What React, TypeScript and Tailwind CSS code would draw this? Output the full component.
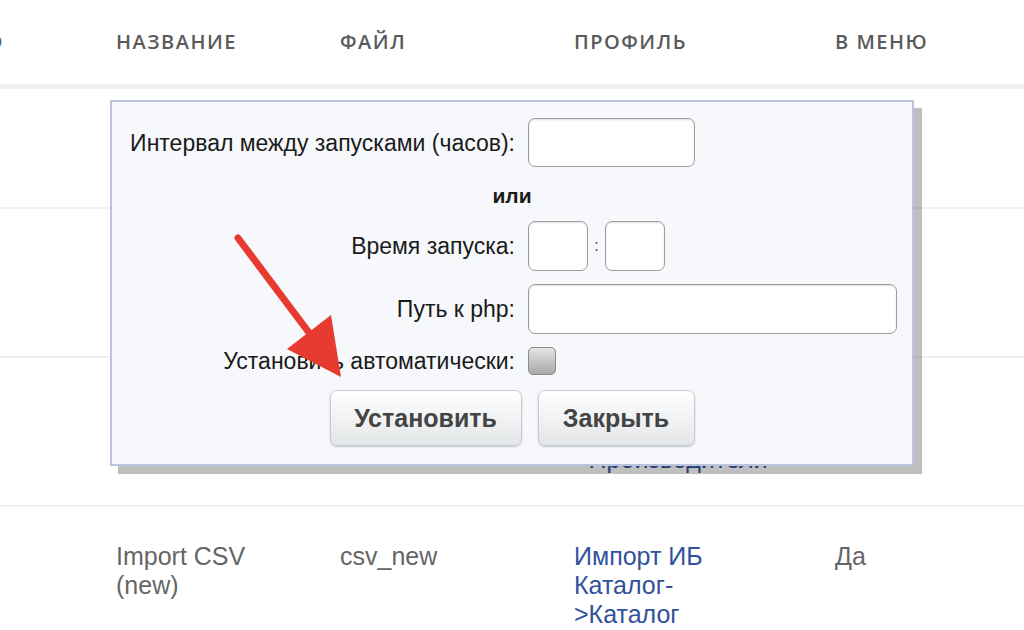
import { FC } from "react"

const rows = [
  { name: "Import CSV", file: "csv", profile: ["Импорт ИБ", "Каталог-", ">Товары"], menu: "Да", pt: "pt-[35px]" },
  { name: "Import CSV (old)", file: "csv_old", profile: ["Импорт ИБ", "Каталог-", ">Разделы"], menu: "Нет", pt: "pt-[35px]" },
  { name: "Import CSV (brand)", file: "csv_brand", profile: ["Импорт ИБ", "Каталог-", ">Производители"], menu: "Да", pt: "pt-[29px]" },
  { name: "Import CSV (new)", file: "csv_new", profile: ["Импорт ИБ", "Каталог-", ">Каталог"], menu: "Да", pt: "pt-[35px]" },
]

const cols = "grid grid-cols-[116px_224px_234px_261px_1fr]"

const inputCls =
  "rounded-[7px] border-[1.5px] border-[#9c9c9c] bg-white shadow-[inset_0_1px_2px_rgba(0,0,0,0.12)]"

const buttonCls =
  "h-[56px] rounded-[7px] border border-[#c9cbcd] bg-gradient-to-b from-white to-[#e3e6e8] shadow-[0_1px_2px_rgba(0,0,0,0.2)] font-bold text-[25px] text-[#444]"

const Dialog: FC = () => {
  return (
    <div className="absolute left-[110px] top-[100px] w-[804px] h-[366px]">
      {/* shadow */}
      <div className="absolute left-[8px] top-[8px] w-full h-full bg-black/25" />
      <div className="relative h-full border-2 border-[#bcc3dc] bg-[#f6f8fb] pt-[16px] font-['Liberation_Sans',Arial,sans-serif] text-[23px] leading-[28px] text-[#1a1a1a]">
        <div className="grid grid-cols-[403px_1fr] gap-x-[13px] gap-y-[13px] items-center">
          <div className="text-right">Интервал между запусками (часов):</div>
          <div className={`w-[167px] h-[49px] ${inputCls}`} />

          <div className="col-span-2 h-[28px] pt-[3px] flex items-center justify-center font-bold text-[21px]">или</div>

          <div className="text-right">Время запуска:</div>
          <div className="flex items-center">
            <div className={`w-[60px] h-[50px] ${inputCls}`} />
            <span className="w-[17px] text-center text-[16px] text-[#444]">:</span>
            <div className={`w-[60px] h-[50px] ${inputCls}`} />
          </div>

          <div className="text-right">Путь к php:</div>
          <div className={`w-[369px] h-[50px] ${inputCls}`} />

          <div className="text-right">Установить автоматически:</div>
          <div className="w-[28px] h-[28px] rounded-[5px] border border-[#8a8a8a] bg-gradient-to-b from-[#e4e4e4] to-[#a9a9a9]" />
        </div>

        <div className="flex justify-center gap-[16px] mt-[15px]">
          <button className={`w-[192px] ${buttonCls}`}>Установить</button>
          <button className={`w-[157px] ${buttonCls}`}>Закрыть</button>
        </div>
      </div>
    </div>
  )
}

const Arrow: FC = () => (
  <svg className="absolute left-0 top-0 pointer-events-none" width="1024" height="630">
    <line x1="238" y1="238" x2="316" y2="342" stroke="#e63b2e" strokeWidth="7" strokeLinecap="round" />
    <polygon points="341,377 287,349 331,315" fill="#e63b2e" />
  </svg>
)

const App: FC = () => {
  return (
    <div className="relative w-[1024px] h-[630px] overflow-hidden bg-white">
      {/* header */}
      <div className={`${cols} h-[89px] items-center border-b-[5px] border-[#f0f0f0] font-['Open_Sans',sans-serif] font-semibold text-[20px] tracking-[1.5px] text-[#5a5a5a]`}>
        <div className="flex justify-end pr-[112px]">ID</div>
        <div>НАЗВАНИЕ</div>
        <div>ФАЙЛ</div>
        <div>ПРОФИЛЬ</div>
        <div>В МЕНЮ</div>
      </div>

      {/* rows */}
      <div className="font-['Liberation_Sans',Arial,sans-serif] text-[25px] leading-[29px] text-[#666]">
        {rows.map((r, i) => (
          <div
            key={i}
            className={`${cols} ${i === 0 ? "h-[120px]" : "h-[149px]"} ${i === rows.length - 1 ? "" : "border-b-2 border-[#f0f0f0]"} ${r.pt}`}
          >
            <div />
            <div className="pr-[70px]">{r.name}</div>
            <div>{r.file}</div>
            <div className="text-[#30529c]">
              {r.profile.map((p) => (
                <div key={p}>{p}</div>
              ))}
            </div>
            <div>{r.menu}</div>
          </div>
        ))}
      </div>

      <Dialog />
      <Arrow />
    </div>
  )
}

export default App
